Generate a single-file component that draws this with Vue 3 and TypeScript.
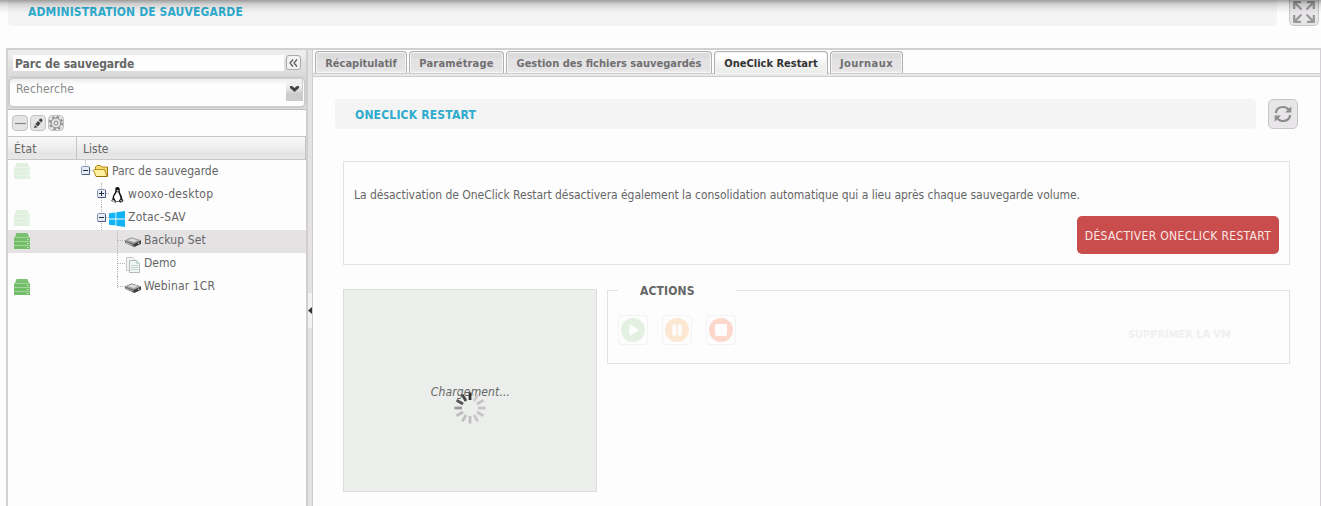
<script setup lang="ts">
interface Row {
  kind: 'folder' | 'linux' | 'windows' | 'disk' | 'docs'
  label: string
  level: number
  toggle?: 'minus' | 'plus'
  state?: 'on' | 'faded'
  selected?: boolean
  last?: boolean
}

const rows: Row[] = [
  { kind: 'folder', label: 'Parc de sauvegarde', level: 0, toggle: 'minus', state: 'faded' },
  { kind: 'linux', label: 'wooxo-desktop', level: 1, toggle: 'plus' },
  { kind: 'windows', label: 'Zotac-SAV', level: 1, toggle: 'minus', state: 'faded' },
  { kind: 'disk', label: 'Backup Set', level: 2, state: 'on', selected: true },
  { kind: 'docs', label: 'Demo', level: 2 },
  { kind: 'disk', label: 'Webinar 1CR', level: 2, state: 'on', last: true },
]

const tabs = [
  { label: 'Récapitulatif', cls: 't1' },
  { label: 'Paramétrage', cls: 't2' },
  { label: 'Gestion des fichiers sauvegardés', cls: 't3' },
  { label: 'OneClick Restart', cls: 't4 active' },
  { label: 'Journaux', cls: 't5' },
]

const spokes = ['#333', '#ccc', '#c4c4c4', '#c4c4c4', '#c6c6c6', '#c6c6c6', '#c0c0c0', '#c0c0c0', '#bdbdbd', '#999', '#555', '#444']
</script>

<template>
  <div class="page">
    <header class="top">
      <div class="bar top-bar"><span class="s-admin">ADMINISTRATION DE SAUVEGARDE</span></div>
      <button class="square expand">
        <svg width="22" height="22" viewBox="0 0 22 22" fill="none" stroke="#979797" stroke-width="2.200">
          <path d="M1.200 8V1.200H8M1.500 1.500l7 7M14 1.200h6.800V8M20.500 1.500l-7 7M1.200 14v6.800H8M1.500 20.500l7-7M20.800 14v6.800H14M20.500 20.500l-7-7" />
        </svg>
      </button>
    </header>
    <div class="shade"></div>

    <div class="frame">
      <aside class="side">
        <div class="side-head">
          <span class="side-title">Parc de sauvegarde</span>
          <button class="collapse">
            <svg width="9" height="8" viewBox="0 0 9 8" fill="none" stroke="#555" stroke-width="1.200"><path d="M4 .5L1 4l3 3.500M8 .5L5 4l3 3.500" /></svg>
          </button>
        </div>
        <div class="search">
          <div class="search-box">
            <span class="s-rech">Recherche</span>
            <span class="drop"><svg width="9" height="6" viewBox="0 0 9 6"><path d="M0 0h2l2.500 2L7 0h2v2L4.500 6 0 2z" fill="#444" /></svg></span>
          </div>
        </div>
        <div class="tools">
          <button class="tool"><svg width="16" height="16" viewBox="0 0 16 16"><path d="M3 8.500h11" stroke="#888" stroke-width="1.200" /></svg></button>
          <button class="tool"><svg width="16" height="16" viewBox="0 0 16 16"><path d="M4 13l.8-3 2.700 2.200zM5.300 9.200l2.800-3.200 2.500 2.300-2.700 3.200zM8.700 5.300l1-1.200q1.200-1 2.300.1t.1 2.300l-.9 1z" fill="#444" /></svg></button>
          <button class="tool">
            <svg width="16" height="16" viewBox="0 0 16 16" fill="none" stroke="#888">
              <circle cx="8" cy="8" r="6.200" stroke-width="1.600" stroke-dasharray="2.400 2.469" />
              <circle cx="8" cy="8" r="4.900" stroke-width="1" /><circle cx="8" cy="8" r="2" />
            </svg>
          </button>
        </div>
        <div class="cols"><span class="c1">État</span><span class="c2">Liste</span></div>
        <div v-for="row in rows" :key="row.label" class="row" :class="{ selected: row.selected }">
          <div class="state">
            <svg v-if="row.state" :class="row.state" width="16" height="16" viewBox="0 0 16 16">
              <path d="M2.500 0h11L15 4H1z" fill="#7ac070" />
              <path d="M0 5h16v3H0zM0 9h16v3H0zM0 13h16v3H0z" fill="#72bd68" />
              <path d="M0 4.500h16M0 8.500h16M0 12.500h16" stroke="#a5d49d" />
              <path d="M13 6.500h1.500M13 10.500h1.500M13 14.500h1.500" stroke="#d5ecd0" />
            </svg>
          </div>
          <div class="item" :class="['lv' + row.level, { last: row.last, root: row.level === 0 }]">
            <span class="lead">
              <svg v-if="row.toggle" class="toggle" width="9" height="9" viewBox="0 0 9 9">
                <rect x=".5" y=".5" width="8" height="8" rx="1" fill="#e7ecf4" stroke="#8493b2" />
                <path d="M1 8.500h7.500V1" fill="none" stroke="#485b80" />
                <path d="M2 4.500h5" stroke="#222e45" />
                <path v-if="row.toggle === 'plus'" d="M4.500 2v5" stroke="#222e45" />
              </svg>
            </span>
            <svg v-if="row.kind === 'folder'" class="ico" width="16" height="16" viewBox="0 0 16 16">
              <path d="M2.500 12.500V4L4 2.500h3.500L9 4h5.500v8.500z" fill="#f3d873" stroke="#b48a1a" />
              <path d="M3 13.500L.6 7.500l.6-1h10.300L14 13.500z" fill="#fdf0a0" stroke="#bb8d19" />
              <path d="M14.500 4v9.500H3" fill="none" stroke="#96700e" />
            </svg>
            <svg v-else-if="row.kind === 'linux'" class="ico" width="16" height="16" viewBox="0 0 16 16">
              <path d="M8.500 0C6.500 0 6 1.500 6.300 4.300 6 6 3.500 8.500 3.500 11.500L2.300 14l4.200 1.800 1-1h2.800l1.200 1 3-1.800-1.300-2.500c.2-3-2.400-5-2.400-7C11 1.500 10.500 0 8.500 0z" fill="#111" />
              <path d="M7.500 5.300h2c.2 2.200 2 3.700 1.900 6.200l-1.800 2.800H7L4.900 10.500C5 8.500 7.300 7 7.500 5.300z" fill="#fff" />
              <path d="M7.200 3.500l1.400-.5 1.600.8-1.600 1z" fill="#ddd" />
              <path d="M3.600 12.200l3 2.500-.6.800-3-1.300zM11.300 12.500l2.200 1-1.900 1.500z" fill="#c8c8c8" />
            </svg>
            <svg v-else-if="row.kind === 'windows'" class="ico" width="16" height="16" viewBox="0 0 16 16">
              <path d="M0 2.300l6.500-.9v6.100H0zM7.300 1.200L16 0v7.500H7.300zM0 8.500h6.500v6.100L0 13.700zM7.300 8.500H16V16l-8.700-1.200z" fill="#10b3f3" />
            </svg>
            <svg v-else-if="row.kind === 'disk'" class="ico" width="16" height="16" viewBox="0 0 16 16">
              <path d="M0 6.500L6.500 3.500 16 6.500v3.200L9 13 0 8.800z" fill="#6b6b6b" />
              <path d="M0 6.500L6.500 3.500 16 6.500 9 9.800z" fill="#a4a4a4" />
              <path d="M3 6.300L6.800 4.600l5.700 1.700-3.500 1.700z" fill="#dedede" />
              <path d="M9 10l7-3.300v3L9 13z" fill="#3d3d3d" /><path d="M1 8.300l6 2.700" stroke="#c8c8c8" stroke-width=".7" />
              <circle cx="13.700" cy="9.300" r=".8" fill="#ddd" />
            </svg>
            <svg v-else class="ico" width="16" height="16" viewBox="0 0 16 16">
              <path d="M1.500.5h6l2 2v11h-8z" fill="#f4f4f4" stroke="#c4c4c4" />
              <path d="M4.500 3.500h7l3 3v9h-10z" fill="#f0f6f5" stroke="#b9b9b9" />
              <path d="M11.500 3.500v3h3M6 8.500h7M6 10.500h7M6 12.500h7" fill="none" stroke="#c3d4d1" />
            </svg>
            <span class="name" :class="'k-' + row.kind">{{ row.label }}</span>
          </div>
        </div>
      </aside>

      <div class="split"><span class="grip"><svg width="4" height="7" viewBox="0 0 4 7"><path d="M4 0v7L0 3.500z" fill="#333" /></svg></span></div>

      <main class="main">
        <nav class="tabs">
          <div v-for="tab in tabs" :key="tab.label" class="tab" :class="tab.cls"><span>{{ tab.label }}</span></div>
        </nav>
        <div class="strip"></div>
        <div class="title-row">
          <div class="bar"><span class="s-one">ONECLICK RESTART</span></div>
          <button class="square">
            <svg width="18" height="18" viewBox="0 0 18 18" fill="none" stroke="#8d8d8d" stroke-width="2.200">
              <path d="M1.800 8C2.300 4.500 5 2 9 2c2.500 0 4.300 1 5.500 2.700M16.200 10c-.5 3.500-3.200 6-7.200 6-2.500 0-4.300-1-5.500-2.700" />
              <path d="M17.300 1.300v6.200h-6.200zM.7 16.700v-6.200h6.200z" fill="#8d8d8d" stroke="none" />
            </svg>
          </button>
        </div>
        <section class="info">
          <p><span class="s-info">La désactivation de OneClick Restart désactivera également la consolidation automatique qui a lieu après chaque sauvegarde volume.</span></p>
          <button class="danger"><span>DÉSACTIVER ONECLICK RESTART</span></button>
        </section>
        <div class="lower">
          <div class="preview">
            <em>Chargement...</em>
            <svg class="spinner" width="32" height="32" viewBox="-16 -16 32 32">
              <path v-for="(c, i) in spokes" :key="i" d="M0-15.500v7.500" :stroke="c" stroke-width="2.800" :transform="`rotate(${i * 30})`" />
            </svg>
          </div>
          <fieldset class="actions">
            <legend><span>ACTIONS</span></legend>
            <div class="action-row">
              <button class="act"><svg width="24" height="24" viewBox="0 0 24 24"><circle cx="12" cy="12" r="12" fill="#e3f1e2" /><path d="M9 6.800v10.400L17.500 12z" fill="#fdfdfd" stroke="#fdfdfd" stroke-linejoin="round" /></svg></button>
              <button class="act"><svg width="24" height="24" viewBox="0 0 24 24"><circle cx="12" cy="12" r="12" fill="#fce8d2" /><path d="M9.300 8v8M14.700 8v8" stroke="#fdfdfd" stroke-width="4" stroke-linecap="round" /></svg></button>
              <button class="act"><svg width="24" height="24" viewBox="0 0 24 24"><circle cx="12" cy="12" r="12" fill="#fcd7cc" /><rect x="6" y="6" width="12" height="12" rx="2" fill="#fdfdfd" /></svg></button>
              <span class="remove">SUPPRIMER LA VM</span>
            </div>
          </fieldset>
        </div>
      </main>
    </div>
  </div>
</template>

<style>
body { background: #fdfdfd; overflow: hidden; }
</style>

<style scoped>
* { box-sizing: border-box; }
.page { position: relative; width: 1321px; height: 506px; overflow: hidden; background: #fdfdfd; color: #666; font: 12px/16px "DejaVu Sans Condensed", "DejaVu Sans", sans-serif; }
button { padding: 0; margin: 0; font: inherit; display: flex; align-items: center; justify-content: center; }
span { white-space: nowrap; }
.top { display: flex; height: 48px; padding-left: 8px; align-items: flex-start; }
.bar { background: #f4f4f4; border-radius: 4px; color: #2eabcd; font-weight: 700; padding-left: 20px; display: flex; align-items: center; }
.top-bar { width: 1269px; height: 26px; padding-bottom: 3px; border-radius: 0 0 4px 4px; }
.s-admin { letter-spacing: .12px; }
.s-one { letter-spacing: .2px; padding-top: 1px; }
.s-info { letter-spacing: -.035px; }
.square { width: 30px; height: 30px; border: 1px solid #c6c6c6; border-radius: 5px; background: #e8e6e8; flex: none; }
.expand { margin: -4px 0 0 12px; padding-top: 2px; }
.shade { position: absolute; inset: 0 0 auto; height: 14px; background: linear-gradient(rgba(0,0,0,.36), rgba(0,0,0,.15) 4px, rgba(0,0,0,.05) 9px, transparent); }
.frame { display: flex; height: 458px; margin-left: 6px; border: 2px solid #d2d0d2; border-width: 2px 1px 0 2px; width: 1315px; }
.side { width: 298px; flex: none; }
.side-head { height: 27px; display: flex; background: linear-gradient(#eceeec 0 6px, #e2e2e2 12px, #dadada); border-bottom: 1px solid #d0d0d0; padding: 5px; gap: 2px; }
.side-title { width: 271px; height: 16px; background: #fdfdfd; padding-left: 2px; font-weight: 700; line-height: 18px; letter-spacing: -.06px; }
.collapse { width: 15px; height: 15px; border: 1px solid #aaa; border-radius: 3px; background: #f2f2f2; }
.search { height: 33px; border-bottom: 1px solid #bbb; padding-bottom: 1px; background: #ddd; }
.search-box { height: 31px; border: 2px solid #cdcdcd; border-radius: 5px; background: linear-gradient(#eee, #fdfdfd 6px); display: flex; justify-content: space-between; color: #888; padding: 0 1px 0 6px; }
.s-rech { padding-top: 2px; letter-spacing: .15px; }
.drop { width: 17px; height: 22px; border: 1px solid #ccc; border-width: 0 1px 1px 0; background: linear-gradient(#f0f0f0 30%, #e2e2e2 50%, #ccc 70%); display: flex; align-items: center; justify-content: center; padding-bottom: 2px; }
.tools { display: flex; height: 26px; gap: 2px; padding: 5px 4px; }
.tool { width: 16px; height: 16px; border: 1px solid #c2c2c2; border-radius: 4px; background: #e5e5e5; }
.tool svg { flex: none; }
.cols { display: flex; height: 24px; border: 1px solid #c6c6c6; border-width: 1px 1px 1px 0; background: linear-gradient(#f8f8f8, #eee 50%, #e4e4e4 75%, #e8e8e8); line-height: 24px; }
.c1 { width: 69px; border-right: 1px solid #c6c6c6; padding-left: 6px; letter-spacing: .2px; }
.c2 { padding-left: 6px; }
.row { display: flex; height: 23.250px; }
.selected { background: #e5e2e4; }
.state { width: 69px; padding: 3px 0 0 6px; flex: none; }
.state svg, .ico, .toggle { display: block; }
.faded { opacity: .2; }
.item { display: flex; height: 100%; }
.lv0 { padding-left: 4px; } .lv1 { padding-left: 20px; } .lv2 { padding-left: 36px; }
.lead { position: relative; width: 12px; height: 100%; padding-top: 6px; }
.toggle { position: relative; }
.lead::before { content: ""; position: absolute; left: 4px; top: 0; bottom: 0; border-left: 1px dotted #b5b5b5; }
.lead::after { content: ""; position: absolute; left: 9px; width: 3px; top: 10px; border-top: 1px dotted #b5b5b5; }
.lv2 .lead::after { left: 5px; width: 7px; }
.lv2 .lead { margin-right: -1px; }
.root .lead::before { bottom: 14px; } .last .lead::before { bottom: 12px; }
.ico { flex: none; margin-top: 4px; margin-right: 3px; }
.lv2 .ico { margin-left: 1px; }
.lv0 .ico { margin-top: 3px; }
.name { padding-top: 2px; }
.lv0 .name, .lv1 .k-linux { padding-top: 3px; }
.k-linux { letter-spacing: .3px; }
.k-windows { letter-spacing: .25px; }
.k-disk { letter-spacing: .12px; }
.split { width: 7px; background: #e4e2e4; border: 2px solid #d0ced0; border-width: 0 1px 0 2px; flex: none; display: flex; padding-top: 243px; }
.grip { width: 4px; height: 35px; background: #f2f2f2; display: flex; align-items: center; }
.main { flex: 1; min-width: 0; }
.tabs { display: flex; height: 23px; gap: 2px; padding: 1px 0 0 2px; }
.tab { height: 22px; border: 1px solid #b0b0b0; border-bottom: 0; border-radius: 4px 4px 0 0; background: linear-gradient(#dcdcdc 6px, #e4e2e4 7px 17px, #eee); box-shadow: inset 0 0 0 1px #f5f5f5; display: flex; justify-content: center; align-items: center; font-weight: 700; color: #707070; font-size: 11px; padding-top: 3px; }
.t1 { width: 92px; } .t2 { width: 95px; letter-spacing: .18px; } .t3 { width: 206px; } .t4 { width: 114px; } .t5 { width: 73px; letter-spacing: .45px; }
.active { height: 23px; color: #333; background: linear-gradient(#fdfdfd 7px, #f0f2f0 12px, #e9ece9); position: relative; padding-top: 2px; }
.strip { height: 4px; border: 1px solid #cfcdcf; border-width: 1px 0; background: #e8e8e8; }
.title-row { display: flex; gap: 12px; padding: 22px 0 0 22px; }
.title-row .bar { width: 921px; height: 30px; }
.info { width: 947px; height: 104px; border: 1px solid #e2e2e2; margin: 32px 0 0 30px; padding: 0 10px; display: flex; flex-direction: column; }
.info p { margin: 25px 0 0; height: 29px; }
.danger { width: 202px; height: 38px; align-self: flex-end; background: #ca4d4d; color: #f8e8e4; border: 0; border-radius: 5px; letter-spacing: .33px; padding-top: 2px; }
.lower { display: flex; gap: 10px; padding: 24px 0 0 30px; }
.preview { width: 254px; height: 203px; border: 1px solid #dcdedc; background: #ebeeeb; display: grid; justify-items: center; align-content: start; padding-top: 94px; }
.preview em { font-style: italic; height: 8px; letter-spacing: .15px; padding-left: 1px; }
.actions { width: 683px; height: 81px; border: 1px solid #e2e2e2; margin: -6px 0 0; padding: 0 0 0 10px; min-width: 0; }
.preview, .actions { flex: none; }
legend { width: 118px; padding: 0 0 0 22px; font-weight: 700; height: 14px; line-height: 16px; letter-spacing: .15px; }
.action-row { display: flex; gap: 14px; padding-top: 18px; }
.act { width: 30px; height: 30px; border: 1px solid #f3f3f3; border-radius: 4px; background: none; }
.remove { margin: 12px 0 0 378px; color: #f0f0f0; font-weight: 700; font-size: 11px; letter-spacing: -.05px; }
</style>
